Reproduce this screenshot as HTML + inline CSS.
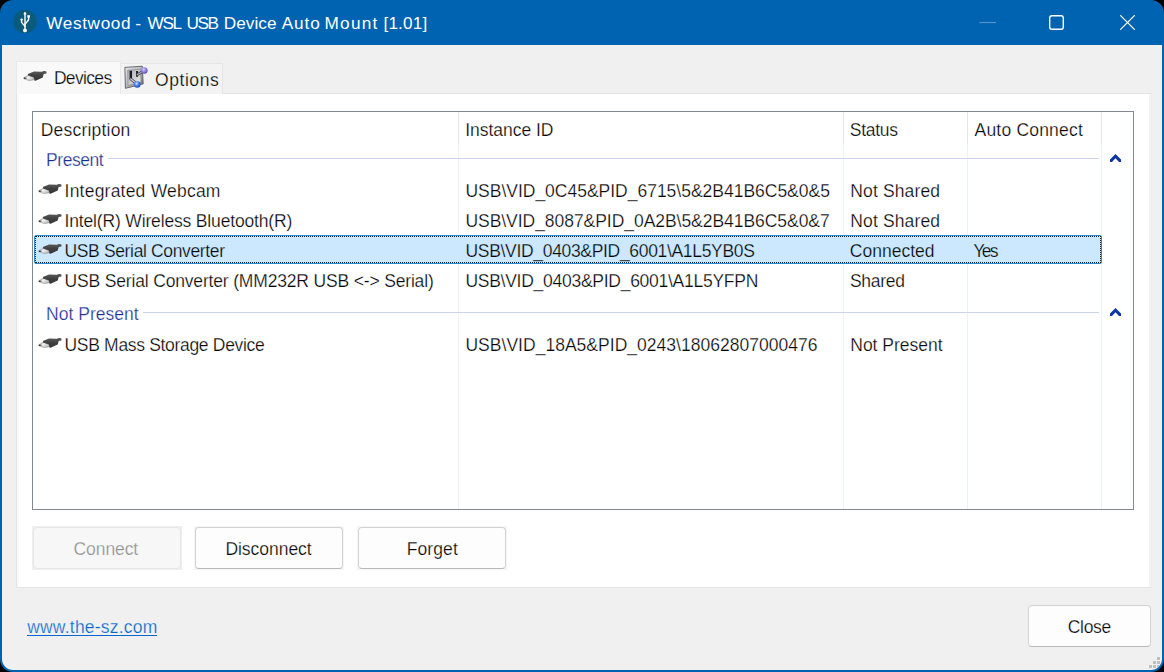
<!DOCTYPE html>
<html lang="en">
<head>
<meta charset="utf-8">
<title>Westwood - WSL USB Device Auto Mount [1.01]</title>
<style>
*{box-sizing:border-box;margin:0;padding:0}
html,body{width:1164px;height:672px;overflow:hidden;background:#000}
body{font-family:"Liberation Sans",sans-serif;font-size:17.5px;color:#000;position:relative}
.abs{position:absolute}
#win{left:0;top:0;width:1164px;height:672px;background:#0063b1;border-radius:13px;overflow:hidden}
#client{left:2px;top:45px;width:1160px;height:625px;overflow:hidden;background:#f0f0f0;border-radius:0 0 11px 11px}
.t{position:absolute;white-space:nowrap;line-height:20px;height:20px;-webkit-text-stroke:.25px #fff}
/* tabs */
#tab1{left:16px;top:61px;width:105px;height:33px;background:#f9f9f9;border:1px solid #e9e9e9;border-bottom:none}
#tab2{left:120px;top:63px;width:103px;height:31px;background:#f3f3f3;border:1px solid #e6e6e6;border-bottom:none}
#page{left:16px;top:93px;width:1136px;height:495px;background:#fafafa;border:1px solid #e4e4e4;border-right-color:#eee}
#pagein{left:19px;top:94px;width:1130px;height:493px;background:#fff}
#list{left:32px;top:111px;width:1102px;height:399px;background:#fff;border:1px solid #828790}
.vh{position:absolute;top:112px;width:1px;height:32px;background:#e5e5e5}
.vl{position:absolute;top:144px;width:1px;height:365px;background:#edf2fa}
.hl{position:absolute;height:1px;background:#cbd4ec}
.sel{left:34px;top:235px;width:1068px;height:29px;background:#cce8ff;border:1px solid #2a8ad4;border-radius:2px}
.sel i{position:absolute;left:0;top:0;right:0;bottom:0;border:1px dotted #1a1a1a}
.bw{position:absolute;background:#f6f6f6}
.btn{position:absolute;left:1px;top:1px;right:1px;bottom:1px;background:#fdfdfd;border:1px solid #d2d2d2;border-bottom-color:#b9b9b9;border-radius:4px}
.btn.dis{background:#f7f7f7;border-color:#e6e6e6}
.ul{position:absolute;background:#0066cc;height:1.5px}
</style>
</head>
<body>
<div id="win" class="abs">
  <div id="client" class="abs"><div class="abs" style="left:1155px;top:612px;width:3px;height:3px;background:#bfbfbf"></div><div class="abs" style="left:1151px;top:616px;width:3px;height:3px;background:#bfbfbf"></div><div class="abs" style="left:1155px;top:616px;width:3px;height:3px;background:#bfbfbf"></div><div class="abs" style="left:1147px;top:620px;width:3px;height:3px;background:#bfbfbf"></div><div class="abs" style="left:1151px;top:620px;width:3px;height:3px;background:#bfbfbf"></div><div class="abs" style="left:1155px;top:620px;width:3px;height:3px;background:#bfbfbf"></div></div>

  <!-- title bar -->
  <svg class="abs" style="left:12px;top:8px" width="26" height="26" viewBox="0 0 26 26">
    <circle cx="13" cy="13.4" r="11.7" fill="#0a5a7c"/>
    <g stroke="#fff" stroke-width="1.4" fill="none" stroke-linecap="round" stroke-linejoin="round">
      <path d="M13 5.5V21"/>
      <path d="M9.6 12V14.4L13 18.4"/>
      <path d="M16.6 9V11.8L13 16.4"/>
    </g>
    <circle cx="13" cy="22.4" r="1.9" fill="#fff"/>
    <rect x="15.3" y="7.2" width="2.6" height="2.4" fill="#fff"/>
    <circle cx="9.6" cy="11.6" r="1.2" fill="#fff"/>
    <path d="M13 3.9L14.2 6.2H11.8Z" fill="#fff" stroke="#fff" stroke-width=".6" stroke-linejoin="round"/>
  </svg>
  <svg class="abs" style="left:960px;top:0" width="204" height="45" viewBox="0 0 204 45">
    <path d="M19.5 22.5H36" stroke="#fff" stroke-opacity=".32" stroke-width="1.2"/>
    <rect x="89.7" y="15.7" width="13.6" height="13.6" rx="2.2" fill="none" stroke="#fff" stroke-width="1.4"/>
    <path d="M160.6 15.6L174.4 29.4M174.4 15.6L160.6 29.4" stroke="#fff" stroke-width="1.3" stroke-linecap="round"/>
  </svg>

  <!-- tabs -->
  <div id="page" class="abs"></div><div id="pagein" class="abs"></div><div class="abs" style="left:1149px;top:94px;width:2px;height:493px;background:#f4f4f4"></div>
  <div id="tab2" class="abs"></div>
  <div id="tab1" class="abs"></div>

  <!-- list -->
  <div id="list" class="abs"></div>
  <div class="vh" style="left:458px"></div><div class="vl" style="left:458px"></div>
  <div class="vh" style="left:843px"></div><div class="vl" style="left:843px"></div>
  <div class="vh" style="left:967px"></div><div class="vl" style="left:967px"></div>
  <div class="vh" style="left:1101px"></div><div class="vl" style="left:1101px"></div>
  <div class="hl" style="left:108px;top:158px;width:991px"></div>
  <div class="hl" style="left:143px;top:312px;width:956px"></div>
  <div class="abs sel"><i></i></div>

  <!-- chevrons -->
  <svg class="abs" style="left:1108px;top:152px" width="16" height="12" viewBox="0 0 16 12"><path d="M7.5 2L13 7.5V10H11L7.5 6.3L4 10H2V7.5Z" fill="#0a36a6"/></svg>
  <svg class="abs" style="left:1108px;top:306px" width="16" height="12" viewBox="0 0 16 12"><path d="M7.5 2L13 7.5V10H11L7.5 6.3L4 10H2V7.5Z" fill="#0a36a6"/></svg>

  <!-- buttons -->
  <div class="bw" style="left:32px;top:526px;width:150px;height:44px;background:#efefef"><div class="btn dis"></div></div>
  <div class="bw" style="left:194px;top:526px;width:150px;height:44px"><div class="btn"></div></div>
  <div class="bw" style="left:357px;top:526px;width:150px;height:44px"><div class="btn"></div></div>
  <div class="bw" style="left:1027px;top:604px;width:125px;height:44px;background:#f0f0f0"><div class="btn"></div></div>
  <div class="ul" style="left:27px;top:634.5px;width:130px"></div>

  <!-- icons -->
<svg class="abs" width="0" height="0" style="left:0;top:0"><defs><linearGradient id="ub" x1="0" y1="0" x2="0" y2="1"><stop offset="0" stop-color="#5c5c5c"/><stop offset=".5" stop-color="#404040"/><stop offset="1" stop-color="#353535"/></linearGradient><linearGradient id="ut" x1="0" y1="0" x2="1" y2="1"><stop offset="0" stop-color="#b0b0b0"/><stop offset=".4" stop-color="#f4f4f4"/><stop offset="1" stop-color="#a8a8a8"/></linearGradient></defs></svg>
<svg class="abs" style="left:35.1px;top:177.2px" width="32" height="22" viewBox="0 0 32 22"><path d="M4 13.6L8.3 11.3L13.9 13.5L13.9 15.8L9.4 16.6L4 14.8Z" fill="url(#ut)" stroke="#8c8c8c" stroke-width=".6"/><path d="M3.8 13.5L6.6 13.8L6.7 14.6L3.8 14.9Z" fill="#2e2e2e"/><path d="M7.8 10L14 7.6L21.9 7.7L23.6 7L25 6.9L26.6 7.7L26.4 9.4L23.7 10L22.7 13.4L15.6 16.7L14.4 16.6L13.9 13.5L8.1 11.6Z" fill="url(#ub)"/></svg>
<svg class="abs" style="left:35.1px;top:207.2px" width="32" height="22" viewBox="0 0 32 22"><path d="M4 13.6L8.3 11.3L13.9 13.5L13.9 15.8L9.4 16.6L4 14.8Z" fill="url(#ut)" stroke="#8c8c8c" stroke-width=".6"/><path d="M3.8 13.5L6.6 13.8L6.7 14.6L3.8 14.9Z" fill="#2e2e2e"/><path d="M7.8 10L14 7.6L21.9 7.7L23.6 7L25 6.9L26.6 7.7L26.4 9.4L23.7 10L22.7 13.4L15.6 16.7L14.4 16.6L13.9 13.5L8.1 11.6Z" fill="url(#ub)"/></svg>
<svg class="abs" style="left:35.1px;top:237.2px" width="32" height="22" viewBox="0 0 32 22"><path d="M4 13.6L8.3 11.3L13.9 13.5L13.9 15.8L9.4 16.6L4 14.8Z" fill="url(#ut)" stroke="#8c8c8c" stroke-width=".6"/><path d="M3.8 13.5L6.6 13.8L6.7 14.6L3.8 14.9Z" fill="#2e2e2e"/><path d="M7.8 10L14 7.6L21.9 7.7L23.6 7L25 6.9L26.6 7.7L26.4 9.4L23.7 10L22.7 13.4L15.6 16.7L14.4 16.6L13.9 13.5L8.1 11.6Z" fill="url(#ub)"/></svg>
<svg class="abs" style="left:35.1px;top:267.2px" width="32" height="22" viewBox="0 0 32 22"><path d="M4 13.6L8.3 11.3L13.9 13.5L13.9 15.8L9.4 16.6L4 14.8Z" fill="url(#ut)" stroke="#8c8c8c" stroke-width=".6"/><path d="M3.8 13.5L6.6 13.8L6.7 14.6L3.8 14.9Z" fill="#2e2e2e"/><path d="M7.8 10L14 7.6L21.9 7.7L23.6 7L25 6.9L26.6 7.7L26.4 9.4L23.7 10L22.7 13.4L15.6 16.7L14.4 16.6L13.9 13.5L8.1 11.6Z" fill="url(#ub)"/></svg>
<svg class="abs" style="left:35.1px;top:331.2px" width="32" height="22" viewBox="0 0 32 22"><path d="M4 13.6L8.3 11.3L13.9 13.5L13.9 15.8L9.4 16.6L4 14.8Z" fill="url(#ut)" stroke="#8c8c8c" stroke-width=".6"/><path d="M3.8 13.5L6.6 13.8L6.7 14.6L3.8 14.9Z" fill="#2e2e2e"/><path d="M7.8 10L14 7.6L21.9 7.7L23.6 7L25 6.9L26.6 7.7L26.4 9.4L23.7 10L22.7 13.4L15.6 16.7L14.4 16.6L13.9 13.5L8.1 11.6Z" fill="url(#ub)"/></svg>
<svg class="abs" style="left:20px;top:64px" width="32" height="22" viewBox="0 0 32 22"><path d="M4 13.6L8.3 11.3L13.9 13.5L13.9 15.8L9.4 16.6L4 14.8Z" fill="url(#ut)" stroke="#8c8c8c" stroke-width=".6"/><path d="M3.8 13.5L6.6 13.8L6.7 14.6L3.8 14.9Z" fill="#2e2e2e"/><path d="M7.8 10L14 7.6L21.9 7.7L23.6 7L25 6.9L26.6 7.7L26.4 9.4L23.7 10L22.7 13.4L15.6 16.7L14.4 16.6L13.9 13.5L8.1 11.6Z" fill="url(#ub)"/></svg>
<svg class="abs" style="left:120px;top:62px" width="33" height="30" viewBox="0 0 33 30"><defs><linearGradient id="pl" x1="0" y1="0" x2="1" y2="1"><stop offset="0" stop-color="#ececf0"/><stop offset=".5" stop-color="#b4b4bc"/><stop offset="1" stop-color="#6a6a74"/></linearGradient><linearGradient id="pi" x1="0" y1="0" x2="1" y2="1"><stop offset="0" stop-color="#a4a4ac"/><stop offset=".6" stop-color="#d2d2d8"/><stop offset="1" stop-color="#ececf0"/></linearGradient><radialGradient id="pb" cx=".4" cy=".35" r=".7"><stop offset="0" stop-color="#d6ceff"/><stop offset=".55" stop-color="#8a7cdc"/><stop offset="1" stop-color="#4d409f"/></radialGradient><radialGradient id="bb" cx=".4" cy=".35" r=".7"><stop offset="0" stop-color="#c6e2ff"/><stop offset=".5" stop-color="#3f7fe8"/><stop offset="1" stop-color="#1844b0"/></radialGradient></defs><path d="M4.9 5.4L22.3 4.2L23.2 21.9L5.4 26.3Z" fill="url(#pl)" stroke="#5e5e66" stroke-width=".9" stroke-linejoin="round"/><path d="M7.6 8.2L20.3 7.3L21 19.8L8.1 23.4Z" fill="url(#pi)" stroke="#77777f" stroke-width=".5"/><path d="M9.6 8.8H12V17.4L9.6 17Z" fill="#1b1b20"/><path d="M16.1 8.9H18.1V14.7H16.1Z" fill="#1b1b20"/><path d="M10.8 17L16.6 21.8" stroke="#3c3c42" stroke-width="2.8" stroke-linecap="round"/><path d="M10.8 17L16.6 21.8" stroke="#c9c9cf" stroke-width="1.4" stroke-linecap="round"/><path d="M17.4 12.6L23 9.4" stroke="#3c3c42" stroke-width="2.6" stroke-linecap="round"/><path d="M17.4 12.6L23 9.4" stroke="#b4b4ba" stroke-width="1.2" stroke-linecap="round"/><circle cx="24.3" cy="8.5" r="3.3" fill="url(#pb)"/><circle cx="17.2" cy="22.5" r="3.3" fill="url(#bb)"/></svg>
<div class="t" id="title" style="left:46.5px;top:13px;font-size:17.2px;color:#fff;-webkit-text-stroke:0"><span class="w" style="letter-spacing:0.617px;margin-left:-0.21px">Westwood</span> <span class="w" style="margin-left:-0.62px">-</span> <span class="w" style="letter-spacing:-1.317px;margin-left:1.64px">WSL</span> <span class="w" style="letter-spacing:-1.390px;margin-left:0.85px">USB</span> <span class="w" style="letter-spacing:0.061px;margin-left:1.30px">Device</span> <span class="w" style="letter-spacing:0.961px;margin-left:0.34px">Auto</span> <span class="w" style="letter-spacing:1.309px;margin-left:-1.28px">Mount</span> <span class="w" style="letter-spacing:0.134px;margin-left:-0.01px">[1.01]</span></div>
<div class="t" style="left:53.89px;top:68px;letter-spacing:-0.663px;-webkit-text-stroke-color:#f9f9f9">Devices</div>
<div class="t" style="left:155.03px;top:70px;letter-spacing:0.560px;-webkit-text-stroke-color:#f3f3f3">Options</div>
<div class="t" style="left:40.69px;top:120px;letter-spacing:0.209px">Description</div>
<div class="t" style="left:465.22px;top:120px;letter-spacing:-0.028px">Instance ID</div>
<div class="t" style="left:849.84px;top:120px;letter-spacing:-0.307px">Status</div>
<div class="t" style="left:974.54px;top:120px;letter-spacing:0.202px">Auto Connect</div>
<div class="t" style="left:46.06px;top:150px;color:#1b2f92;letter-spacing:-0.442px">Present</div>
<div class="t" style="left:46.00px;top:304px;color:#1b2f92;letter-spacing:0.031px">Not Present</div>
<div class="t" style="left:64.58px;top:181px;letter-spacing:0.217px">Integrated Webcam</div>
<div class="t" style="left:465.45px;top:181px;letter-spacing:-0.010px">USB\VID_0C45&amp;PID_6715\5&amp;2B41B6C5&amp;0&amp;5</div>
<div class="t" style="left:850.22px;top:181px;letter-spacing:0.148px">Not Shared</div>
<div class="t" style="left:64.58px;top:211px;letter-spacing:-0.162px">Intel(R) Wireless Bluetooth(R)</div>
<div class="t" style="left:465.45px;top:211px;letter-spacing:-0.043px">USB\VID_8087&amp;PID_0A2B\5&amp;2B41B6C5&amp;0&amp;7</div>
<div class="t" style="left:850.22px;top:211px;letter-spacing:0.148px">Not Shared</div>
<div class="t" style="left:64.53px;top:241px;letter-spacing:-0.357px;-webkit-text-stroke-color:#cce8ff">USB Serial Converter</div>
<div class="t" style="left:465.55px;top:241px;letter-spacing:-0.322px;-webkit-text-stroke-color:#cce8ff">USB\VID_0403&amp;PID_6001\A1L5YB0S</div>
<div class="t" style="left:849.74px;top:241px;letter-spacing:0.017px;-webkit-text-stroke-color:#cce8ff">Connected</div>
<div class="t" style="left:973.34px;top:241px;letter-spacing:-1.690px;-webkit-text-stroke-color:#cce8ff">Yes</div>
<div class="t" style="left:64.56px;top:271px;letter-spacing:-0.167px">USB Serial Converter (MM232R USB &lt;-&gt; Serial)</div>
<div class="t" style="left:465.45px;top:271px;letter-spacing:-0.267px">USB\VID_0403&amp;PID_6001\A1L5YFPN</div>
<div class="t" style="left:849.97px;top:271px;letter-spacing:-0.287px">Shared</div>
<div class="t" style="left:64.56px;top:335px;letter-spacing:-0.318px">USB Mass Storage Device</div>
<div class="t" style="left:465.45px;top:335px;letter-spacing:0.026px">USB\VID_18A5&amp;PID_0243\18062807000476</div>
<div class="t" style="left:850.26px;top:335px;letter-spacing:-0.011px">Not Present</div>
<div class="t" style="left:27.18px;top:617px;color:#0066cc;letter-spacing:0.211px;-webkit-text-stroke-color:#f0f0f0">www.the-sz.com</div>
<div class="t" style="left:73.57px;top:539px;color:#8f8f8f;letter-spacing:-0.086px;-webkit-text-stroke-color:#f7f7f7">Connect</div>
<div class="t" style="left:225.38px;top:539px;letter-spacing:-0.028px;-webkit-text-stroke-color:#fdfdfd">Disconnect</div>
<div class="t" style="left:406.75px;top:539px;letter-spacing:0.098px;-webkit-text-stroke-color:#fdfdfd">Forget</div>
<div class="t" style="left:1067.78px;top:617px;letter-spacing:-0.325px;-webkit-text-stroke-color:#fdfdfd">Close</div>
</div>
</body>
</html>
